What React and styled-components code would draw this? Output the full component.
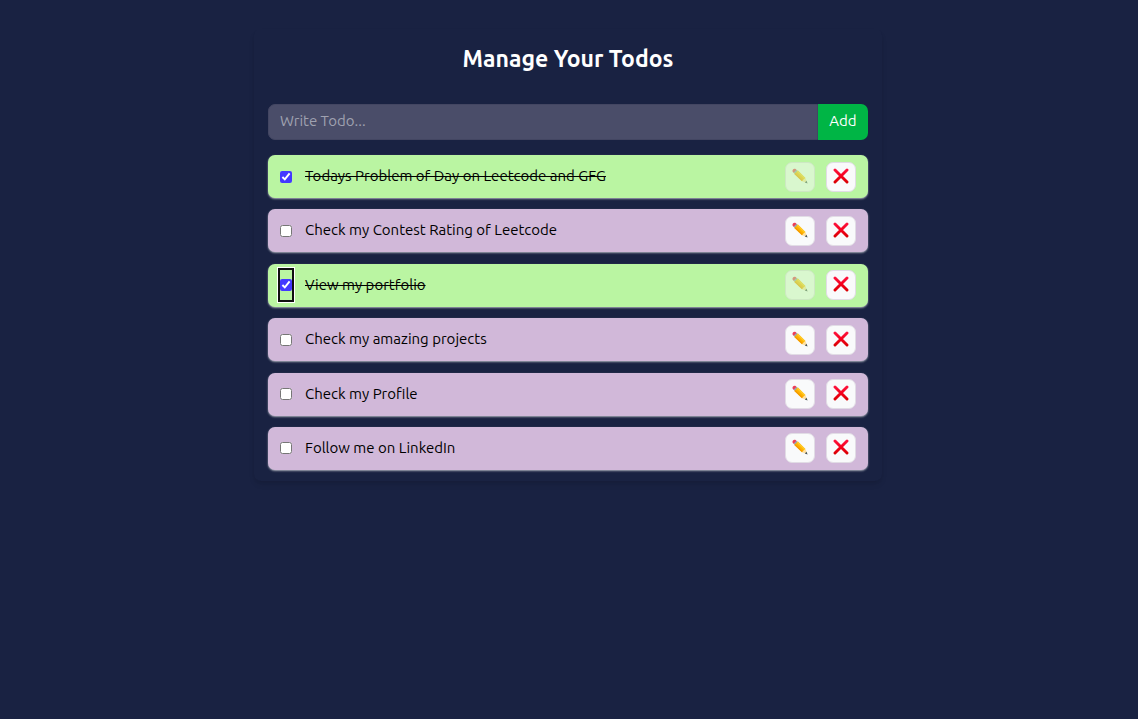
import React, { useState } from "react";
import styled, { createGlobalStyle } from "styled-components";

const GlobalStyle = createGlobalStyle`
  *, *::before, *::after { box-sizing: border-box; }
  body {
    margin: 0;
    background: #192242;
    color: #fff;
    font-family: Ubuntu, "Noto Sans", sans-serif;
    font-size: 15px;
    line-height: 22px;
  }
  button, input { font: inherit; }
`;

const Page = styled.main`
  min-height: 100vh;
  padding: 29px 2px 29px 0;
  border-right: 3px solid #fff;
`;

const Card = styled.section`
  width: 100%;
  max-width: 628px;
  margin: 0 auto;
  padding: 14px 14px 11px;
  border-radius: 7px;
  box-shadow: 0 4px 6px -1px rgba(0, 0, 0, 0.1), 0 2px 4px -2px rgba(0, 0, 0, 0.1);
`;

const Title = styled.h1`
  margin: 0 0 29px;
  font-size: 23px;
  line-height: 32px;
  font-weight: 700;
  text-align: center;
`;

const Form = styled.form`
  display: flex;
  height: 36px;
  margin-bottom: 15px;
`;

const Field = styled.input`
  flex: 1;
  min-width: 0;
  padding: 0 11px 2px;
  color: #fff;
  background: #4a4d69;
  border: 1px solid #434662;
  border-radius: 7px 0 0 7px;
  outline: none;
  &::placeholder { color: #9fa1b0; opacity: 1; }
`;

const AddButton = styled.button`
  width: 50px;
  padding: 0 0 2px;
  color: #fff;
  background: #00b545;
  border: 0;
  border-radius: 0 7px 7px 0;
`;

const List = styled.ul`
  display: flex;
  flex-direction: column;
  justify-content: space-between;
  min-height: 315px;
  margin: 0;
  padding: 0;
  list-style: none;
`;

const Row = styled.li`
  display: flex;
  align-items: center;
  gap: 11px;
  min-height: 43px;
  padding: 6px 12px;
  color: #000;
  background: ${(p) => (p.$done ? "#baf5a2" : "#d1b8d9")};
  border-radius: 7px;
  box-shadow: 0 1px 2px rgba(255, 255, 255, 0.6);
`;

const Check = styled.input`
  width: 12px;
  height: 30px;
  margin: 0;
  accent-color: #4338ff;
  &:focus {
    outline: 2px solid #101010;
    outline-offset: 0;
    border-radius: 3px;
    box-shadow: 0 0 0 3px #fff;
  }
`;

const Label = styled.label`
  flex: 1;
  min-width: 0;
  padding: 0 0 1px 2px;
  text-decoration: ${(p) => (p.$done ? "line-through" : "none")};
`;

const IconButton = styled.button`
  display: flex;
  align-items: center;
  justify-content: center;
  width: 30px;
  height: 30px;
  padding: 0 0 2px;
  background: #f9fafb;
  border: 1px solid #e1dce5;
  border-radius: 7px;
  &:disabled { opacity: 0.5; }
`;

const PencilIcon = () => (
  <svg width="16" height="16" viewBox="0 0 16 16" aria-hidden="true">
    <path d="M.8 1.8C1.4.7 2.8.4 3.6 1.1L5.1 2.4 2.2 5.3.9 4C.4 3.4.4 2.5.8 1.8Z" fill="#ee3c57" />
    <path d="M4.4 1.8 5.9 3.1 2.9 6.1 1.6 4.7Z" fill="#9aa5ad" />
    <path d="M5.9 2.6 13.4 9.9 10 13.3 2.4 6Z" fill="#ffb300" />
    <path d="M5.9 2.6 13.4 9.9 12.3 11 4.8 3.7Z" fill="#ffca28" />
    <path d="M3.4 5 11 12.3 10 13.3 2.4 6Z" fill="#f59b00" />
    <path d="M13.4 9.9 15.5 15.3 10 13.3Z" fill="#ffe0a0" />
    <path d="M14.5 12.7 15.6 15.4 12.8 14.4Z" fill="#45535b" />
  </svg>
);

const CrossIcon = () => (
  <svg width="16" height="16" viewBox="0 0 16 16" aria-hidden="true">
    <defs>
      <linearGradient id="cross" x1="0" y1="0" x2="0" y2="16" gradientUnits="userSpaceOnUse">
        <stop offset="0" stopColor="#ff1744" />
        <stop offset="0.5" stopColor="#f5001c" />
        <stop offset="1" stopColor="#d50000" />
      </linearGradient>
    </defs>
    <path d="M2 2 14 14M14 2 2 14" fill="none" stroke="url(#cross)" strokeWidth="2.9" strokeLinecap="round" />
  </svg>
);

const initialTodos = [
  { id: 1, text: "Todays Problem of Day on Leetcode and GFG", done: true },
  { id: 2, text: "Check my Contest Rating of Leetcode", done: false },
  { id: 3, text: "View my portfolio", done: true },
  { id: 4, text: "Check my amazing projects", done: false },
  { id: 5, text: "Check my Profile", done: false },
  { id: 6, text: "Follow me on LinkedIn", done: false },
];

function TodoItem({ todo, onToggle, onRemove }) {
  const id = `todo-${todo.id}`;
  return (
    <Row $done={todo.done}>
      <Check id={id} type="checkbox" checked={todo.done} onChange={onToggle} autoFocus={todo.id === 3} />
      <Label htmlFor={id} $done={todo.done}>{todo.text}</Label>
      <IconButton type="button" aria-label="Edit" disabled={todo.done}><PencilIcon /></IconButton>
      <IconButton type="button" aria-label="Delete" onClick={onRemove}><CrossIcon /></IconButton>
    </Row>
  );
}

export default function App() {
  const [todos, setTodos] = useState(initialTodos);
  const [draft, setDraft] = useState("");

  const add = (e) => {
    e.preventDefault();
    if (!draft.trim()) return;
    setTodos([{ id: Date.now(), text: draft, done: false }, ...todos]);
    setDraft("");
  };

  return (
    <>
      <GlobalStyle />
      <Page>
        <Card>
          <Title>Manage Your Todos</Title>
          <Form onSubmit={add}>
            <Field
              type="text"
              aria-label="Todo"
              placeholder="Write Todo..."
              value={draft}
              onChange={(e) => setDraft(e.target.value)}
            />
            <AddButton type="submit">Add</AddButton>
          </Form>
          <List>
            {todos.map((todo) => (
              <TodoItem
                key={todo.id}
                todo={todo}
                onToggle={() => setTodos(todos.map((t) => (t.id === todo.id ? { ...t, done: !t.done } : t)))}
                onRemove={() => setTodos(todos.filter((t) => t.id !== todo.id))}
              />
            ))}
          </List>
        </Card>
      </Page>
    </>
  );
}
